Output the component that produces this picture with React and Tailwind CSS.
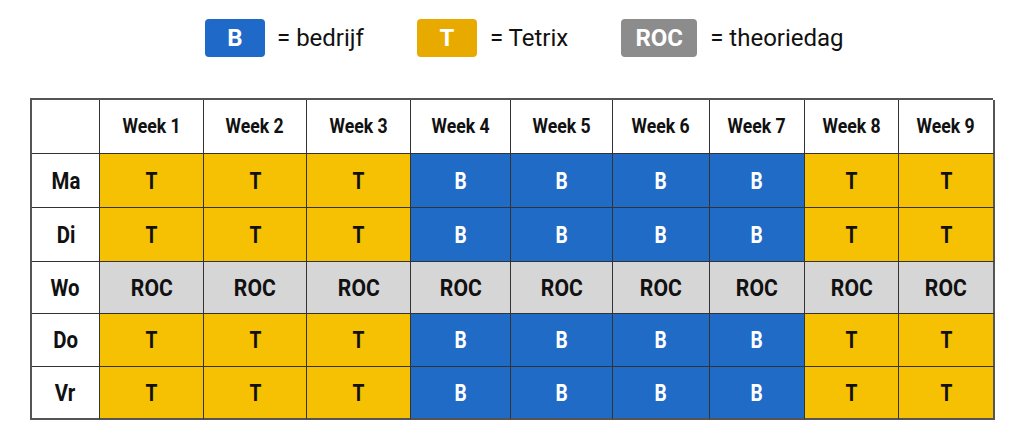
const weeks = ["Week 1", "Week 2", "Week 3", "Week 4", "Week 5", "Week 6", "Week 7", "Week 8", "Week 9"];

// T = Tetrix, B = bedrijf, R = ROC
const rows = [
  { day: "Ma", cells: "TTTBBBBTT", h: "h-[54px]" },
  { day: "Di", cells: "TTTBBBBTT", h: "h-[54px]" },
  { day: "Wo", cells: "RRRRRRRRR", h: "h-[52px]" },
  { day: "Do", cells: "TTTBBBBTT", h: "h-[53px]" },
  { day: "Vr", cells: "TTTBBBBTT", h: "h-[53px]" },
];

const cellStyle = {
  T: "bg-[#F5C102] text-[#111]",
  B: "bg-[#1F6BC6] text-white",
  R: "bg-[#D6D6D6] text-[#111]",
};

const cellLabel = { T: "T", B: "B", R: "ROC" };

function Legend() {
  return (
    <div className="flex items-center pl-[205px] h-[38px]">
      <div className="w-[60px] h-[38px] rounded-[4px] bg-[#1F6AC8] text-white flex items-center justify-center text-[24px] font-bold">
        B
      </div>
      <span className="ml-[12px] text-[24px] text-[#111]">= bedrijf</span>
      <div className="ml-[53px] w-[60px] h-[38px] rounded-[4px] bg-[#E9AA00] text-white flex items-center justify-center text-[24px] font-bold">
        T
      </div>
      <span className="ml-[13px] text-[24px] text-[#111]">= Tetrix</span>
      <div className="ml-[53px] w-[76px] h-[38px] rounded-[4px] bg-[#8C8C8C] text-white flex items-center justify-center text-[24px] font-bold">
        ROC
      </div>
      <span className="ml-[13px] text-[24px] text-[#111]">= theoriedag</span>
    </div>
  );
}

export default function App() {
  return (
    <div
      className="w-full h-[431px] bg-white pt-[19px] overflow-hidden"
      style={{ fontFamily: "Roboto, 'Liberation Sans', sans-serif" }}
    >
      <Legend />

      {/* Schedule table */}
      <div className="ml-[30px] mt-[41px] w-[963px] grid grid-cols-[68px_104px_103px_104px_100px_102px_97px_95px_94px_96px] border-t-2 border-l-2 border-[#555]">
        <div className="h-[54px] bg-white border-r border-b border-[#333]" />
        {weeks.map((w, i) => (
          <div
            key={w}
            className={`h-[54px] bg-white border-b border-[#333] flex items-center justify-center text-[21px] font-bold text-[#111] ${
              i === weeks.length - 1 ? "border-r-2 border-r-[#555]" : "border-r"
            }`}
          >
            <span className="inline-block scale-x-[0.84] whitespace-nowrap">{w}</span>
          </div>
        ))}

        {rows.map((row, r) => (
          <div key={row.day} className="contents">
            <div
              className={`${row.h} bg-white border-r border-[#333] flex items-center justify-center text-[24px] font-bold text-[#111] ${
                r === rows.length - 1 ? "border-b-2 border-b-[#555]" : "border-b"
              }`}
            >
              <span className="inline-block scale-x-[0.85]">{row.day}</span>
            </div>
            {row.cells.split("").map((c, i) => (
              <div
                key={i}
                className={`${row.h} ${cellStyle[c]} border-[#333] flex items-center justify-center font-bold text-[24px] ${
                  i === 8 ? "border-r-2 border-r-[#555]" : "border-r"
                } ${r === rows.length - 1 ? "border-b-2 border-b-[#555]" : "border-b"}`}
              >
                <span className={`inline-block ${c === "R" ? "scale-x-[0.88]" : "scale-x-[0.8]"}`}>
                  {cellLabel[c]}
                </span>
              </div>
            ))}
          </div>
        ))}
      </div>
    </div>
  );
}
